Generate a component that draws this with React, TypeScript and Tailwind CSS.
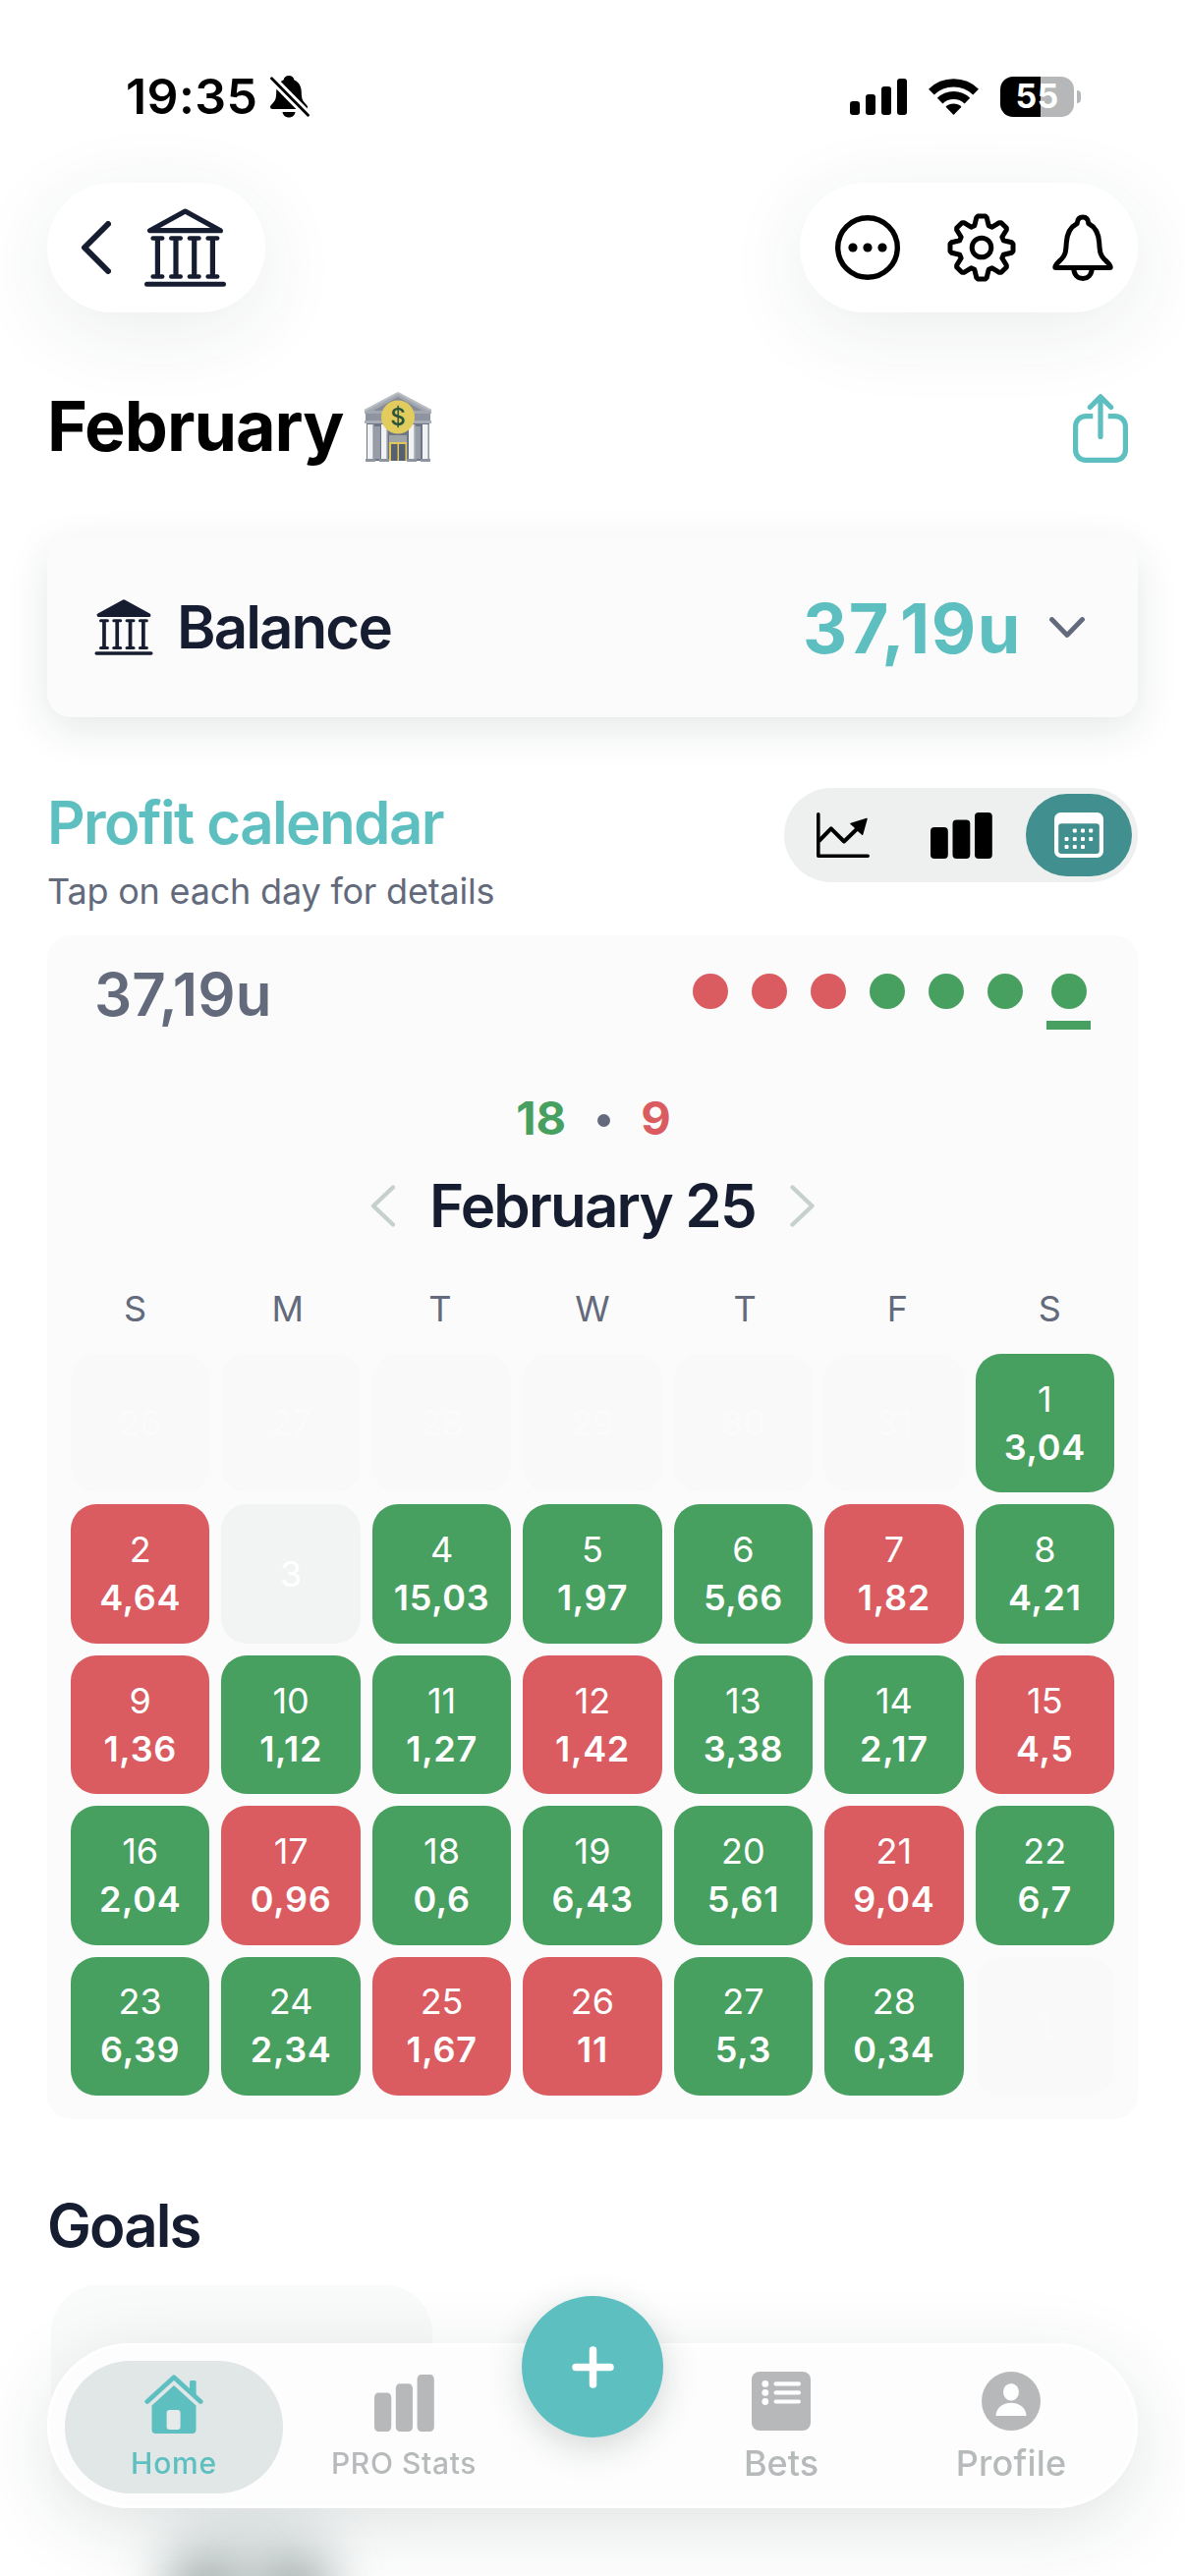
import { useState } from "react";
import type { ReactNode } from "react";
import clsx from "clsx";

type Result = "win" | "loss" | "none" | "outside";

interface Day {
  day: number;
  value?: string;
  result: Result;
}

const win = (day: number, value: string): Day => ({ day, value, result: "win" });
const loss = (day: number, value: string): Day => ({ day, value, result: "loss" });
const outside = (day: number): Day => ({ day, result: "outside" });

const DAYS: Day[] = [
  outside(26),
  outside(27),
  outside(28),
  outside(29),
  outside(30),
  outside(31),
  win(1, "3,04"),
  loss(2, "4,64"),
  { day: 3, result: "none" },
  win(4, "15,03"),
  win(5, "1,97"),
  win(6, "5,66"),
  loss(7, "1,82"),
  win(8, "4,21"),
  loss(9, "1,36"),
  win(10, "1,12"),
  win(11, "1,27"),
  loss(12, "1,42"),
  win(13, "3,38"),
  win(14, "2,17"),
  loss(15, "4,5"),
  win(16, "2,04"),
  loss(17, "0,96"),
  win(18, "0,6"),
  win(19, "6,43"),
  win(20, "5,61"),
  loss(21, "9,04"),
  win(22, "6,7"),
  win(23, "6,39"),
  win(24, "2,34"),
  loss(25, "1,67"),
  loss(26, "11"),
  win(27, "5,3"),
  win(28, "0,34"),
  outside(1),
];

const WEEKDAYS = ["S", "M", "T", "W", "T", "F", "S"];

const STREAK: Result[] = ["loss", "loss", "loss", "win", "win", "win"];

/* ---------- icons ---------- */

function BellSlashIcon() {
  return (
    <svg width="40" height="43" viewBox="0 0 40 43">
      <path
        d="M19 0c-3 0-5 1.800-5.300 4.200C8.500 6.500 6.300 11 6.200 17c-.1 7-1.200 8.600-4.200 11.700C.6 30.200 0 31 0 32c0 1.200.9 2 2.300 2h33.400c1.400 0 2.300-.8 2.300-2 0-1-.6-1.800-2-3.300-3-3.100-4.100-4.700-4.200-11.700-.1-6-2.300-10.500-7.500-12.800C24 1.800 22 0 19 0Z"
        fill="#000"
      />
      <path d="M12.500 37h13c-.5 3.300-3 5.500-6.500 5.500s-6-2.200-6.500-5.500Z" fill="#000" />
      <path d="M1.500 2.700 38.500 40.300" stroke="#fff" strokeWidth="8.500" />
      <path d="M1.500 2.700 38.500 40.300" stroke="#000" strokeWidth="2.800" strokeLinecap="round" />
    </svg>
  );
}

function SignalIcon() {
  return (
    <svg width="58" height="37" viewBox="0 0 58 37">
      <rect x="0" y="23" width="10" height="14" rx="3" />
      <rect x="16" y="16" width="10" height="21" rx="3" />
      <rect x="32" y="8" width="10" height="29" rx="3" />
      <rect x="48" y="0" width="10" height="37" rx="3" />
    </svg>
  );
}

function WifiIcon() {
  return (
    <svg width="51" height="37" viewBox="0 0 51 37">
      <path d="M2.900 13.600A32.500 32.500 0 0 1 48.100 13.600" fill="none" stroke="#000" strokeWidth="8.200" />
      <path d="M11.600 22.600A20 20 0 0 1 39.400 22.600" fill="none" stroke="#000" strokeWidth="8" />
      <path d="M17.500 28.700A11.500 11.500 0 0 1 33.500 28.700L25.500 37Z" />
    </svg>
  );
}

function BankIcon({ filled, width, height }: { filled?: boolean; width: number; height: number }) {
  const columns = [13.4, 32, 50.7, 69.4];
  return (
    <svg width={width} height={height} viewBox="0 0 83 80" fill="#171d30">
      <path
        d="M41.500 3 5.600 22.700H77.400Z"
        fill={filled ? "#171d30" : "none"}
        stroke="#171d30"
        strokeWidth="5.200"
        strokeLinejoin="round"
      />
      {columns.map((x) => (
        <g key={x}>
          <rect x={x - 7} y="28.300" width="14" height="4.400" rx="2.200" />
          <rect x={x - 2.6} y="30" width="5.200" height="40" />
          <rect x={x - 7} y="67.300" width="14" height="4.400" rx="2.200" />
        </g>
      ))}
      <rect x="0" y="74.800" width="83" height="5" rx="2.500" />
    </svg>
  );
}

interface ChevronProps {
  d: string;
  width: number;
  height: number;
  stroke: number;
  className: string;
}

function Chevron({ d, width, height, stroke, className }: ChevronProps) {
  return (
    <svg
      width={width}
      height={height}
      viewBox={`0 0 ${width} ${height}`}
      className={className}
      fill="none"
      stroke="currentColor"
      strokeWidth={stroke}
      strokeLinecap="round"
      strokeLinejoin="round"
    >
      <path d={d} />
    </svg>
  );
}

function MoreIcon() {
  return (
    <svg width="66" height="66" viewBox="0 0 66 66">
      <circle cx="33" cy="33" r="30.300" fill="none" stroke="#000" strokeWidth="5.400" />
      <circle cx="18" cy="33" r="4.600" />
      <circle cx="33" cy="33" r="4.600" />
      <circle cx="48" cy="33" r="4.600" />
    </svg>
  );
}

// outline of an eight tooth cog around 0,0
const GEAR_PATH =
  Array.from({ length: 8 }, (_, i) => {
    const a = (i * Math.PI) / 4;
    const points = [
      [22.3, -7.2],
      [30.6, -5.2],
      [32, -3.8],
      [32, 3.8],
      [30.6, 5.2],
      [22.3, 7.2],
    ];
    return points
      .map(([r, t]) => {
        const x = r * Math.cos(a) - t * Math.sin(a);
        const y = r * Math.sin(a) + t * Math.cos(a);
        return `${x.toFixed(2)} ${y.toFixed(2)}`;
      })
      .join("L");
  }).reduce((path, tooth, i) => path + (i === 0 ? "M" : "L") + tooth, "") + "Z";

function GearIcon() {
  return (
    <svg width="70" height="70" viewBox="-35 -35 70 70" fill="none" stroke="#000" strokeWidth="5" strokeLinejoin="round">
      <path d={GEAR_PATH} />
      <circle r="9.800" />
    </svg>
  );
}

function BellIcon() {
  return (
    <svg width="62" height="68" viewBox="0 0 62 68" fill="none" stroke="#000" strokeWidth="5" strokeLinejoin="round" strokeLinecap="round">
      <path d="M31 3C27.500 3 25.500 5.500 25.200 9.500 17.500 13.500 14.800 20 14.300 29 13.800 39 13 42 9 46 5 49.800 2.800 51.500 2.800 54 2.800 54.400 3 54.500 3.500 54.500H58.500C59 54.500 59.200 54.400 59.200 54 59.200 51.500 57 49.800 53 46 49 42 48.200 39 47.700 29 47.200 20 44.500 13.500 36.800 9.500 36.500 5.500 34.500 3 31 3Z" />
      <path d="M21.800 55C21.800 61.500 25.500 65.400 31 65.400S40.200 61.500 40.200 55" />
    </svg>
  );
}

function BankEmoji() {
  return (
    <svg width="70" height="72" viewBox="0 0 70 72">
      <path d="M35 1 69 19v3H1v-3Z" fill="#a3a8b0" />
      <path d="M35 5 60 19H10Z" fill="#868c98" />
      <path d="M35 1 69 19M35 1 1 19" stroke="#b9bdc3" strokeWidth="2" />
      <rect x="2" y="22" width="66" height="9" fill="#8f95a0" />
      <rect x="1" y="29" width="68" height="3" fill="#a9adb5" />
      <rect x="3" y="32" width="64" height="38" fill="#6e7686" />
      <rect x="11" y="35" width="6" height="33" fill="#979da7" />
      <rect x="52" y="35" width="6" height="33" fill="#979da7" />
      <rect x="26" y="44" width="18" height="7" fill="#9fa5a6" />
      {[4, 18, 46, 60].map((x) => (
        <g key={x}>
          <rect x={x} y="33" width="6" height="36" fill="#f1f2f4" />
          <rect x={x + 5} y="33" width="1.500" height="36" fill="#b6bac1" />
          <rect x={x - 2} y="68" width="10" height="3" fill="#8f95a0" />
        </g>
      ))}
      <rect x="26" y="51" width="18" height="19" fill="#e0c75a" />
      <rect x="28" y="53" width="6.500" height="17" fill="#566071" />
      <rect x="36" y="53" width="6.500" height="17" fill="#566071" />
      <circle cx="35" cy="25.500" r="17" fill="#e2cc5e" />
      <text x="35" y="34" textAnchor="middle" fontFamily="Inter" fontSize="24" fontWeight="500" letterSpacing="0" fill="#27533a">
        $
      </text>
    </svg>
  );
}

function ShareIcon() {
  return (
    <svg width="56" height="70" viewBox="0 0 56 70" fill="none" stroke="#5dbfc0" strokeWidth="5.200" strokeLinejoin="round">
      <path d="M20.300 22.600H13.500C7 22.600 2.600 27 2.600 33V57C2.600 63 7 67.400 13 67.400H43C49 67.400 53.400 63 53.400 57V33C53.400 27 49 22.600 42.500 22.600H35.700" />
      <path d="M28 3.500V43.500M17.300 13.500 28 2.800 38.700 13.500" strokeLinecap="round" />
    </svg>
  );
}

function LineChartIcon() {
  return (
    <svg width="54" height="46" viewBox="0 0 54 46">
      <path d="M1.800 1.800V44.200H52.200" fill="none" stroke="#000" strokeWidth="3.600" strokeLinecap="round" strokeLinejoin="round" />
      <path d="M2.500 29 14.800 16.300 28 29.500 43 15" fill="none" stroke="#000" strokeWidth="4" strokeLinejoin="round" />
      <path d="M51 6.500 35 11.500 38.500 14.500 43.500 19.500 46.600 22.300Z" stroke="#000" strokeWidth="1.500" strokeLinejoin="round" />
    </svg>
  );
}

function BarsIcon({ width, height, fill }: { width: number; height: number; fill: string }) {
  return (
    <svg width={width} height={height} viewBox="0 0 63 47" preserveAspectRatio="none" fill={fill}>
      <rect x="0" y="15" width="17.800" height="32" rx="4" />
      <rect x="22.500" y="7.500" width="17.800" height="39.500" rx="4" />
      <rect x="45" y="0" width="17.800" height="47" rx="4" />
    </svg>
  );
}

function CalendarIcon() {
  const dots = [
    [20.8, 18.5], [29, 18.5], [37.2, 18.5],
    [12.5, 27], [20.8, 27], [29, 27], [37.2, 27],
    [12.5, 35], [20.8, 35], [29, 35],
  ];
  return (
    <svg width="50" height="46" viewBox="0 0 50 46" fill="#fff">
      <rect width="50" height="46" rx="6.500" />
      <rect x="4.200" y="11.300" width="41.600" height="30.700" rx="3" fill="#428f90" />
      {dots.map(([x, y]) => (
        <rect key={`${x}-${y}`} x={x - 2} y={y - 2} width="4" height="4" rx="1" />
      ))}
    </svg>
  );
}

function HomeIcon() {
  return (
    <svg width="60" height="60" viewBox="0 0 60 60" fill="#5dbfc0">
      <path d="M46 7.500a1.500 1.500 0 0 1 1.500-1.500h3.600a1.500 1.500 0 0 1 1.500 1.500V24L46 17Z" />
      <path d="M2.800 27.500 30 2.800 57.200 27.500" fill="none" stroke="#5dbfc0" strokeWidth="4.800" strokeLinecap="round" strokeLinejoin="round" />
      <path d="M30 11 7.500 31.500V56a4 4 0 0 0 4 4h37a4 4 0 0 0 4-4V31.500Z" />
      <rect x="22.600" y="36" width="14" height="20" rx="3" fill="#e6eaea" />
    </svg>
  );
}

function BetsIcon() {
  return (
    <svg width="60" height="60" viewBox="0 0 60 60">
      <rect width="60" height="60" rx="8" fill="#b6b8b9" />
      {[12.4, 21.3, 30.5].map((y) => (
        <g key={y} fill="#fdfefe">
          <circle cx="13.800" cy={y} r="3.400" />
          <rect x="22.500" y={y - 2.1} width="27.500" height="4.200" rx="2" />
        </g>
      ))}
    </svg>
  );
}

function ProfileIcon() {
  return (
    <svg width="60" height="60" viewBox="0 0 60 60">
      <circle cx="30" cy="30" r="30" fill="#b6b8b9" />
      <ellipse cx="30" cy="20.700" rx="8" ry="8.800" fill="#fdfefe" />
      <path d="M14.500 45C14.500 37.500 21 31.800 30 31.800S45.500 37.500 45.500 45Z" fill="#fdfefe" />
    </svg>
  );
}

/* ---------- sections ---------- */

function StatusBar() {
  return (
    <div className="flex h-[186px] items-start justify-between pt-[70px]">
      <div className="flex h-14 items-center gap-[14px] pl-20">
        <span className="w-[133px] text-[50px] leading-none font-semibold tracking-[0.4px] whitespace-nowrap text-black">
          19:35
        </span>
        <BellSlashIcon />
      </div>
      <div className="flex h-14 items-center pr-[58px]">
        <SignalIcon />
        <div className="ml-[22px]">
          <WifiIcon />
        </div>
        <div className="ml-[22px] flex h-[41px] w-[75px] items-center justify-center rounded-[13px] bg-[linear-gradient(to_right,#000_55%,#b5b7b9_55%)] text-[34px] leading-none font-bold tracking-[0.3px] text-white">
          55
        </div>
        <div className="ml-[3px] h-[13px] w-1 rounded-r-full bg-[#b5b7b9]" />
      </div>
    </div>
  );
}

function Header() {
  return (
    <div className="flex justify-between">
      <div className="flex h-[132px] w-[222px] items-center rounded-[66px] bg-white pl-[34px] shadow-[0_18px_84px_rgba(30,60,55,0.09)]">
        <Chevron d="M28 3 4 27 28 51" width={31} height={54} stroke={6} className="text-[#171d30]" />
        <div className="ml-[34px]">
          <BankIcon width={83} height={80} />
        </div>
      </div>
      <div className="flex h-[132px] w-[344px] items-center rounded-[66px] bg-white pl-9 shadow-[0_18px_84px_rgba(30,60,55,0.09)]">
        <MoreIcon />
        <div className="ml-12">
          <GearIcon />
        </div>
        <div className="ml-[37px]">
          <BellIcon />
        </div>
      </div>
    </div>
  );
}

function BalanceCard() {
  return (
    <div className="flex h-[183px] items-center rounded-3xl bg-[#fbfbfb] px-12 shadow-[0_12px_44px_rgba(20,50,45,0.11)]">
      <BankIcon filled width={60} height={57} />
      <span className="-mt-0.5 ml-6 text-[60px] leading-none font-semibold tracking-[-1.9px] text-[#171d30]">Balance</span>
      <span className="mt-0.5 ml-auto text-[70px] leading-none font-bold tracking-[1.6px] text-[#5dbfc0]">37,19u</span>
      <Chevron
        d="M2.500 2.500 18 18.500 33.500 2.500"
        width={36}
        height={22}
        stroke={4.8}
        className="mr-1.5 ml-7 text-[#626a7c]"
      />
    </div>
  );
}

function ViewToggle() {
  const [view, setView] = useState("calendar");
  const views: { id: string; icon: ReactNode }[] = [
    { id: "line", icon: <LineChartIcon /> },
    { id: "bars", icon: <BarsIcon width={63} height={47} fill="#000" /> },
    { id: "calendar", icon: <CalendarIcon /> },
  ];

  return (
    <div className="flex h-24 w-[360px] items-center justify-between rounded-full bg-[#eef0f0] px-1.5">
      {views.map(({ id, icon }) => (
        <button
          key={id}
          type="button"
          onClick={() => setView(id)}
          className={clsx(
            "flex h-[84px] w-[108px] items-center justify-center rounded-[42px]",
            view === id && "bg-[#428f90]"
          )}
        >
          {icon}
        </button>
      ))}
    </div>
  );
}

function DayCell({ day, value, result }: Day) {
  return (
    <div
      className={clsx(
        "flex aspect-square flex-col items-center justify-center rounded-[26px] text-[36px] leading-[49px]",
        result === "win" && "bg-[#48a060] text-white",
        result === "loss" && "bg-[#da5b60] text-white",
        result === "none" && "bg-[#f2f4f4] text-white",
        result === "outside" && "bg-[#f9f9f9] text-[#fbfbfb]"
      )}
    >
      <span>{day}</span>
      {value && <span className="font-semibold tracking-[0.7px]">{value}</span>}
    </div>
  );
}

function CalendarCard() {
  return (
    <div className="rounded-3xl bg-[#fbfbfb] px-6 pb-6">
      <div className="flex h-[120px] items-start justify-between px-6">
        <span className="pt-[30px] text-[60px] leading-none font-semibold tracking-[0.2px] text-[#626a7c]">37,19u</span>
        <div className="flex gap-6 pt-[39px]">
          {STREAK.map((result, i) => (
            <div key={i} className={clsx("size-9 rounded-full", result === "win" ? "bg-[#48a060]" : "bg-[#da5b60]")} />
          ))}
          <div className="flex w-[45px] flex-col items-center gap-3">
            <div className="size-9 rounded-full bg-[#48a060]" />
            <div className="h-[9px] w-full bg-[#48a060]" />
          </div>
        </div>
      </div>

      <div className="mt-[41px] flex h-12 items-center justify-center pl-0.5 text-[47px] leading-none font-bold">
        <span className="text-[#48a060]">18</span>
        <span className="mt-1.5 mr-[31px] ml-8 size-[13px] rounded-full bg-[#626a7c]" />
        <span className="text-[#da5b60]">9</span>
      </div>

      <div className="mt-9 flex h-[60px] items-center justify-center">
        <Chevron d="M23 2.500 3 21.500 23 40.500" width={25} height={43} stroke={4.4} className="text-[#c5d0cf]" />
        <span className="mx-[35px] text-[60px] leading-none font-semibold tracking-[-1.8px] text-[#171d30]">
          February 25
        </span>
        <Chevron d="M2.500 2.500 22.500 21.500 2.500 40.500" width={25} height={43} stroke={4.4} className="text-[#c5d0cf]" />
      </div>

      <div className="-mx-3 mt-[57px] grid grid-cols-7 text-center text-[36px] leading-none text-[#626a7c]">
        {WEEKDAYS.map((label, i) => (
          <span key={i}>{label}</span>
        ))}
      </div>

      <div className="mt-7 grid grid-cols-7 gap-3">
        {DAYS.map((day, i) => (
          <DayCell key={i} {...day} />
        ))}
      </div>
    </div>
  );
}

function TabBar() {
  return (
    <nav className="absolute inset-x-12 top-[2385px] h-[168px] rounded-[84px] shadow-[0_20px_80px_rgba(20,50,45,0.13)]">
      <div className="flex h-full items-center rounded-[84px] border-[3px] border-white bg-[#fdfdfd]/90 px-[15px] pt-[3px] text-[#b6babb] backdrop-blur-lg">
        <div className="flex h-[135px] w-[222px] flex-col items-center rounded-[67px] bg-[#e1e7e7] pt-[14px] text-[#5dbfc0]">
          <HomeIcon />
          <span className="mt-[15px] text-[30px] leading-none font-medium tracking-[0.8px]">Home</span>
        </div>
        <div className="flex h-[135px] w-[246px] flex-col items-center pt-[14px]">
          <BarsIcon width={61} height={58} fill="#b6b8b9" />
          <span className="mt-[17px] text-[30px] leading-none font-medium tracking-[0.6px]">PRO Stats</span>
        </div>
        <div className="w-[138px]" />
        <div className="flex h-[135px] w-[246px] flex-col items-center pt-[11px]">
          <BetsIcon />
          <span className="mt-[15px] text-[36px] leading-none font-medium">Bets</span>
        </div>
        <div className="flex h-[135px] w-[222px] flex-col items-center pt-[11px]">
          <ProfileIcon />
          <span className="mt-[15px] text-[36px] leading-none font-medium tracking-[0.2px]">Profile</span>
        </div>
      </div>
      <button
        type="button"
        className="absolute -top-12 left-[483px] flex size-36 items-center justify-center rounded-full bg-[#5dbfc0] shadow-[0_10px_36px_rgba(20,50,45,0.18)]"
      >
        <svg width="43" height="43" viewBox="0 0 43 43" stroke="#fff" strokeWidth="7.500" strokeLinecap="round">
          <path d="M21.500 4V39M4 21.500H39" />
        </svg>
      </button>
    </nav>
  );
}

export default function App() {
  return (
    <div className="relative h-[2622px] w-[1206px] overflow-hidden bg-white px-12 font-['Inter',sans-serif]">
      <StatusBar />
      <Header />

      <div className="flex h-[229px] items-center justify-between pt-1 pr-2.5">
        <h1 className="flex items-center gap-[21px] text-[70px] leading-none font-bold tracking-[-1px] text-black">
          <span className="-mt-0.5">February</span>
          <BankEmoji />
        </h1>
        <div className="pt-[3px]">
          <ShareIcon />
        </div>
      </div>

      <BalanceCard />

      <div className="flex h-[222px] items-start justify-between pt-[72px]">
        <div className="pt-[5px]">
          <h2 className="text-[60px] leading-none font-semibold tracking-[-1.6px] text-[#5dbfc0]">Profit calendar</h2>
          <p className="mt-[22px] text-[36px] leading-none tracking-[-0.2px] text-[#626a7c]">
            Tap on each day for details
          </p>
        </div>
        <ViewToggle />
      </div>

      <CalendarCard />

      <h2 className="mt-[78px] text-[60px] leading-none font-semibold tracking-[-1.9px] text-[#171d30]">Goals</h2>
      <div className="relative mt-[31px] ml-1 h-[360px] w-[388px] rounded-[48px] bg-linear-to-b from-[#f9fafa] from-20% to-transparent to-70%">
        <div className="absolute top-[230px] left-[128px] h-32 w-36 rounded-full bg-[#dfe6e5] blur-2xl" />
        <div className="absolute top-[274px] left-[118px] size-20 rounded-full bg-[#a9b4b3] blur-xl" />
        <div className="absolute top-[274px] left-[206px] size-20 rounded-full bg-[#a9b4b3] blur-xl" />
      </div>

      <TabBar />
    </div>
  );
}
